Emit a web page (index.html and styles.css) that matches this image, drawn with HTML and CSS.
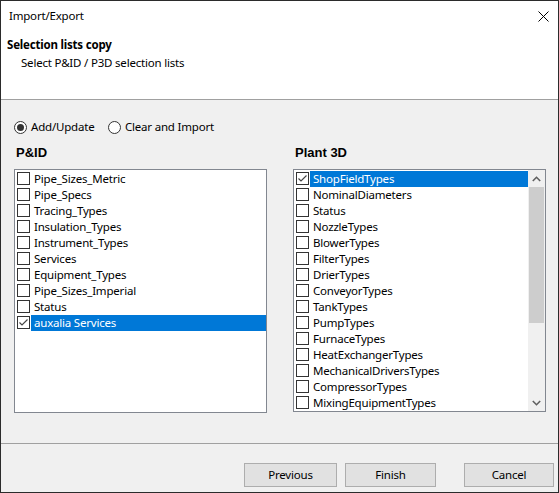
FILE: index.html
```html
<!DOCTYPE html>
<html>
<head>
<meta charset="utf-8">
<link rel="stylesheet" href="styles.css">
</head>
<body>
<div class="window">
  <div class="titlebar">
    <span class="title">Import/Export</span>
    <svg class="close" width="11" height="11" viewBox="0 0 11 11"><path d="M0.5 0.5L10.5 10.5M10.5 0.5L0.5 10.5" stroke="#000" stroke-width="1" fill="none"/></svg>
  </div>
  <div class="header">
    <div class="h-title">Selection lists copy</div>
    <div class="h-sub">Select P&amp;ID / P3D selection lists</div>
  </div>
  <div class="content">
    <div class="radios">
      <label class="radio first"><span class="circle checked"></span>Add/Update</label>
      <label class="radio"><span class="circle"></span>Clear and Import</label>
    </div>
    <div class="columns">
      <div class="col">
        <div class="col-label">P&amp;ID</div>
        <div class="listbox left">
          <div class="rows">
            <div class="row"><span class="cb"></span><span class="txt">Pipe_Sizes_Metric</span></div>
            <div class="row"><span class="cb"></span><span class="txt">Pipe_Specs</span></div>
            <div class="row"><span class="cb"></span><span class="txt">Tracing_Types</span></div>
            <div class="row"><span class="cb"></span><span class="txt">Insulation_Types</span></div>
            <div class="row"><span class="cb"></span><span class="txt">Instrument_Types</span></div>
            <div class="row"><span class="cb"></span><span class="txt">Services</span></div>
            <div class="row"><span class="cb"></span><span class="txt">Equipment_Types</span></div>
            <div class="row"><span class="cb"></span><span class="txt">Pipe_Sizes_Imperial</span></div>
            <div class="row"><span class="cb"></span><span class="txt">Status</span></div>
            <div class="row sel"><span class="cb"><svg width="11" height="11" viewBox="0 0 11 11"><path d="M1.5 5.5L4 8L9.5 2.5" stroke="#444" stroke-width="1.2" fill="none"/></svg></span><span class="txt">auxalia Services</span></div>
          </div>
        </div>
      </div>
      <div class="col right-col">
        <div class="col-label">Plant 3D</div>
        <div class="listbox right">
          <div class="rows">
            <div class="row sel"><span class="cb"><svg width="11" height="11" viewBox="0 0 11 11"><path d="M1.5 5.5L4 8L9.5 2.5" stroke="#444" stroke-width="1.2" fill="none"/></svg></span><span class="txt">ShopFieldTypes</span></div>
            <div class="row"><span class="cb"></span><span class="txt">NominalDiameters</span></div>
            <div class="row"><span class="cb"></span><span class="txt">Status</span></div>
            <div class="row"><span class="cb"></span><span class="txt">NozzleTypes</span></div>
            <div class="row"><span class="cb"></span><span class="txt">BlowerTypes</span></div>
            <div class="row"><span class="cb"></span><span class="txt">FilterTypes</span></div>
            <div class="row"><span class="cb"></span><span class="txt">DrierTypes</span></div>
            <div class="row"><span class="cb"></span><span class="txt">ConveyorTypes</span></div>
            <div class="row"><span class="cb"></span><span class="txt">TankTypes</span></div>
            <div class="row"><span class="cb"></span><span class="txt">PumpTypes</span></div>
            <div class="row"><span class="cb"></span><span class="txt">FurnaceTypes</span></div>
            <div class="row"><span class="cb"></span><span class="txt">HeatExchangerTypes</span></div>
            <div class="row"><span class="cb"></span><span class="txt">MechanicalDriversTypes</span></div>
            <div class="row"><span class="cb"></span><span class="txt">CompressorTypes</span></div>
            <div class="row"><span class="cb"></span><span class="txt">MixingEquipmentTypes</span></div>
          </div>
          <div class="scrollbar">
            <div class="sb-btn"><svg width="9" height="6" viewBox="0 0 9 6"><path d="M0.8 5L4.5 1.3L8.2 5" stroke="#606060" stroke-width="1.6" fill="none"/></svg></div>
            <div class="sb-track"><div class="sb-thumb"></div></div>
            <div class="sb-btn"><svg width="9" height="6" viewBox="0 0 9 6"><path d="M0.8 1L4.5 4.7L8.2 1" stroke="#606060" stroke-width="1.6" fill="none"/></svg></div>
          </div>
        </div>
      </div>
    </div>
  </div>
  <div class="footer">
    <button class="btn prev">Previous</button>
    <button class="btn finish">Finish</button>
    <button class="btn cancel">Cancel</button>
  </div>
</div>
</body>
</html>
```

FILE: styles.css
```css
* { box-sizing: border-box; }
html, body { margin: 0; padding: 0; background: #f0f0f0; }
body {
  font-family: "Noto Sans", "Open Sans", sans-serif;
  font-size: 11.5px;
  letter-spacing: -0.2px;
  color: #000;
}

.window {
  width: 559px;
  height: 493px;
  border: 1px solid #2b2b2b;
  background: #f0f0f0;
  display: flex;
  flex-direction: column;
}

.titlebar {
  height: 30px;
  background: #fff;
  display: flex;
  align-items: center;
  padding-left: 8px;
}
.title { flex: 1; line-height: 16px; }
.close { margin-right: 9px; }

.header {
  height: 69px;
  background: #fff;
  border-bottom: 1px solid #a0a0a0;
  padding: 6px 0 0 6px;
}
.h-title { font-weight: bold; line-height: 16px; }
.h-sub { line-height: 16px; margin-top: 2px; padding-left: 14px; }

.content {
  flex: 1;
  padding: 19px 0 0 13px;
}

.radios { display: flex; height: 16px; align-items: center; }
.radio { display: flex; align-items: center; line-height: 16px; }
.radio.first { width: 94px; }
.circle {
  width: 13px; height: 13px;
  border: 1px solid #333;
  border-radius: 50%;
  background: #fff;
  margin-right: 4px;
  display: flex; align-items: center; justify-content: center;
}
.circle.checked::after {
  content: "";
  width: 7px; height: 7px;
  border-radius: 50%;
  background: #333;
}

.columns { display: flex; gap: 26px; margin-top: 10px; }
.col { width: 253px; }
.col-label {
  font-family: "Liberation Sans", Arial, sans-serif;
  font-weight: bold;
  font-size: 13px;
  letter-spacing: 0;
  line-height: 16px;
  padding-left: 2px;
}

.listbox {
  margin-top: 8px;
  border: 1px solid #828790;
  background: #fff;
  display: flex;
  overflow: hidden;
}
.listbox.left { height: 244px; }
.listbox.right { height: 243px; }

.rows { flex: 1; padding-top: 1px; min-width: 0; }
.row { display: flex; align-items: flex-start; height: 16px; padding-left: 2px; }
.cb {
  width: 13px; height: 13px;
  margin-top: 1px;
  margin-right: 1px;
  border: 1px solid #333;
  background: #fff;
  flex: none;
  display: flex; align-items: center; justify-content: center;
}
.txt {
  flex: 1;
  height: 16px;
  line-height: 16px;
  padding-left: 3px;
  white-space: nowrap;
}
.row.sel .txt { background: #0078d7; color: #fff; }

.scrollbar {
  width: 17px;
  flex: none;
  display: flex;
  flex-direction: column;
  background: #f0f0f0;
}
.sb-btn { height: 17px; display: flex; align-items: center; justify-content: center; }
.sb-track { flex: 1; }
.sb-thumb { height: 136px; margin: 0 1px; background: #cdcdcd; }

.footer {
  height: 49px;
  border-top: 1px solid #a0a0a0;
  padding-top: 19px;
  display: flex;
  align-items: flex-start;
}
.btn {
  height: 24px;
  background: #e1e1e1;
  border: 1px solid #adadad;
  font-family: "Noto Sans", "Open Sans", sans-serif;
  font-size: 11.5px;
  letter-spacing: -0.2px;
  color: #000;
  padding: 0;
  line-height: 20px;
}
.prev { margin-left: 243px; width: 93px; }
.finish { margin-left: 8px; width: 91px; }
.cancel { margin-left: 28px; width: 90px; }
```
